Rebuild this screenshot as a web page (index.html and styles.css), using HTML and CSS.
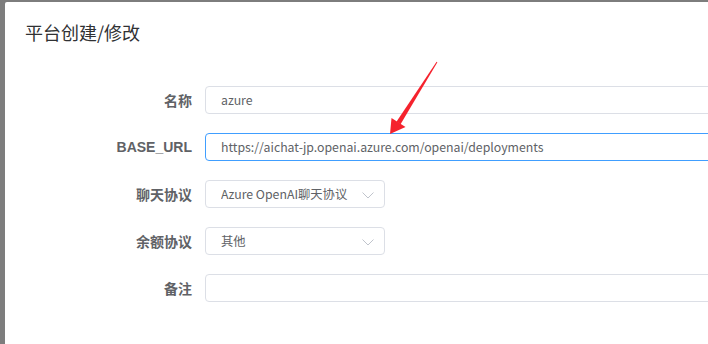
FILE: index.html
```html
<!DOCTYPE html>
<html lang="zh-CN">
<head>
    <meta charset="UTF-8">
    <title>平台创建/修改</title>
    <link rel="stylesheet" href="styles.css">
</head>
<body>
    <div class="backdrop">
        <div class="dialog">
            <div class="dialog-header">
                <span class="dialog-title">平台创建/修改</span>
            </div>
            <div class="dialog-body">
                <div class="form-item">
                    <label class="form-label">名称</label>
                    <div class="form-control wide">
                        <input class="input" type="text" value="azure">
                    </div>
                </div>
                <div class="form-item">
                    <label class="form-label">BASE_URL</label>
                    <div class="form-control wide">
                        <input class="input is-focus" type="text" value="https://aichat-jp.openai.azure.com/openai/deployments">
                    </div>
                </div>
                <div class="form-item">
                    <label class="form-label">聊天协议</label>
                    <div class="form-control select">
                        <input class="input" type="text" value="Azure OpenAI聊天协议" readonly>
                        <svg class="arrow" width="12" height="7" viewBox="0 0 12 7"><path d="M0.5 0.5 L6 6 L11.5 0.5" fill="none" stroke="#c0c4cc" stroke-width="1"/></svg>
                    </div>
                </div>
                <div class="form-item">
                    <label class="form-label">余额协议</label>
                    <div class="form-control select">
                        <input class="input" type="text" value="其他" readonly>
                        <svg class="arrow" width="12" height="7" viewBox="0 0 12 7"><path d="M0.5 0.5 L6 6 L11.5 0.5" fill="none" stroke="#c0c4cc" stroke-width="1"/></svg>
                    </div>
                </div>
                <div class="form-item">
                    <label class="form-label">备注</label>
                    <div class="form-control wide">
                        <input class="input" type="text" value="">
                    </div>
                </div>
            </div>

            <!-- annotation arrow drawn over the screenshot -->
            <svg class="mark" width="60" height="80" viewBox="0 0 60 80">
                <polygon points="57.4,2.3 56.6,1.7 16.6,61.6 20.4,64.4" fill="#f5222d"/>
                <polygon points="10,74 11.5,58 25.5,67" fill="#f5222d"/>
            </svg>
        </div>
    </div>
</body>
</html>
```

FILE: styles.css
```css
* {
    box-sizing: border-box;
}

body {
    margin: 0;
    font-family: "Liberation Sans", "Noto Sans CJK SC", sans-serif;
    overflow: hidden;
}

.backdrop {
    width: 708px;
    height: 344px;
    background: #7d7d7d;
    padding: 2px 0 0 5px;
    overflow: hidden;
}

.dialog {
    position: relative;
    background: #fff;
    height: 100%;
    width: 760px;
    border-radius: 2px 0 0 0;
}

.dialog-header {
    padding: 18px 20px 12px;
}

.dialog-title {
    font-size: 18px;
    line-height: 24px;
    color: #303133;
    font-family: "Noto Sans CJK SC", sans-serif;
}

.dialog-body {
    padding: 30px 20px 0;
}

.form-item {
    display: flex;
    align-items: center;
    margin-bottom: 19px;
}

.form-label {
    flex: none;
    width: 180px;
    padding-right: 13px;
    text-align: right;
    font-size: 14px;
    font-weight: bold;
    color: #606266;
}

.form-control {
    position: relative;
    flex: none;
}

.form-control.wide {
    width: 560px;
}

.form-control.select {
    width: 180px;
}

.input {
    display: block;
    width: 100%;
    height: 28px;
    padding: 0 15px;
    border: 1px solid #dcdfe6;
    border-radius: 4px;
    font-family: "Noto Sans CJK SC", sans-serif;
    font-size: 12.3px;
    color: #606266;
    outline: none;
    background: #fff;
}

.input.is-focus {
    border-color: #409eff;
}

.select .input {
    padding-right: 30px;
}

.arrow {
    position: absolute;
    right: 11px;
    top: 12px;
}

.mark {
    position: absolute;
    left: 375px;
    top: 58px;
}
```
